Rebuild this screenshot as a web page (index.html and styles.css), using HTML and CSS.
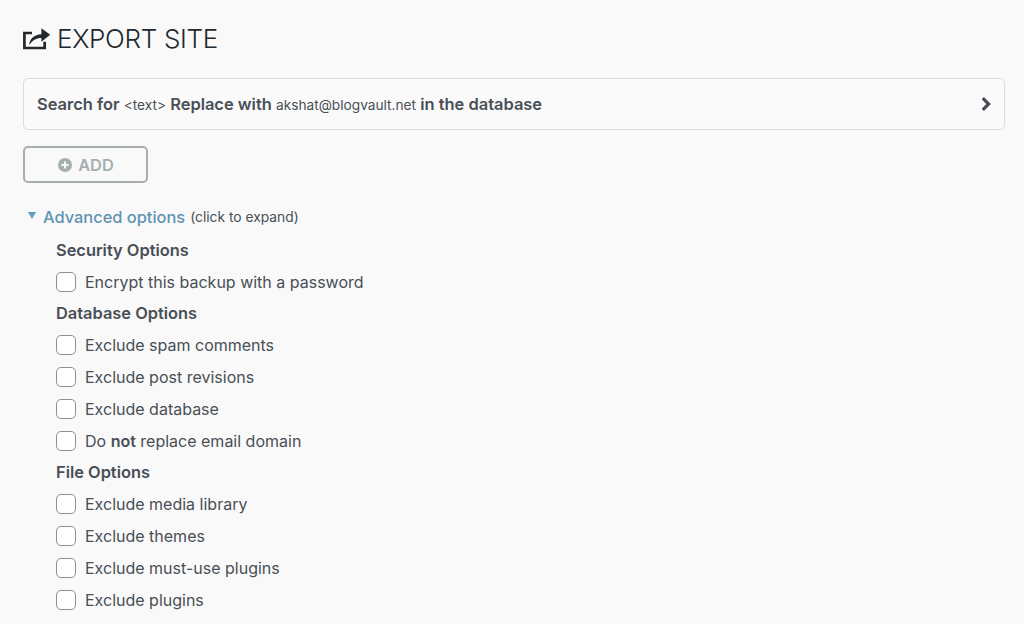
FILE: index.html
```html
<!DOCTYPE html>
<html lang="en">
<head>
    <meta charset="UTF-8">
    <meta name="viewport" content="width=device-width, initial-scale=1.0">
    <title>Export Site</title>
    <link rel="stylesheet" href="styles.css">
</head>
<body>

<header class="page-title">
    <svg class="title-icon" width="28" height="24" viewBox="0 0 28 24">
        <path d="M9 6H1.4V21H21.7V14.7" fill="none" stroke="#23282d" stroke-width="2.7"/>
        <path d="M6.2 18C6.7 12 11 7.6 18.4 7.3V1.3L27.2 7.8L18.4 14.8V11C13 11 9.5 13.5 6.2 18Z" fill="#23282d"/>
    </svg>
    <h1>EXPORT SITE</h1>
</header>

<div class="rule-card">
    <span class="rule-text">
        Search for <span class="rule-value">&lt;text&gt;</span> Replace with <span class="rule-value">akshat@blogvault.net</span> in the database
    </span>
    <svg class="rule-arrow" width="10" height="14" viewBox="0 0 10 14">
        <path d="M1.8 1.2L7.6 7L1.8 12.8" fill="none" stroke="#474d54" stroke-width="3.2"/>
    </svg>
</div>

<button class="add-button">
    <svg width="14" height="14" viewBox="0 0 14 14">
        <circle cx="7" cy="7" r="7" fill="#a7aeb2"/>
        <path d="M7 3.5V10.5M3.5 7H10.5" stroke="#f9f9f9" stroke-width="2"/>
    </svg>
    ADD
</button>

<div class="advanced-title">
    <span class="advanced-arrow"></span>
    <span class="advanced-link">Advanced options</span>
    <span class="advanced-hint">(click to expand)</span>
</div>

<div class="options">
    <h3>Security Options</h3>
    <label class="option"><span class="checkbox"></span>Encrypt this backup with a password</label>

    <h3>Database Options</h3>
    <label class="option"><span class="checkbox"></span>Exclude spam comments</label>
    <label class="option"><span class="checkbox"></span>Exclude post revisions</label>
    <label class="option"><span class="checkbox"></span>Exclude database</label>
    <label class="option"><span class="checkbox"></span><span>Do <b>not</b> replace email domain</span></label>

    <h3>File Options</h3>
    <label class="option"><span class="checkbox"></span>Exclude media library</label>
    <label class="option"><span class="checkbox"></span>Exclude themes</label>
    <label class="option"><span class="checkbox"></span>Exclude must-use plugins</label>
    <label class="option"><span class="checkbox"></span>Exclude plugins</label>
</div>

</body>
</html>
```

FILE: styles.css
```css
html, body {
    height: 624px;
    overflow: hidden;
}
body {
    font-family: Inter, "Liberation Sans", sans-serif;
    background-color: #f9f9f9;
    color: #484f56;
    margin: 0;
    padding: 23px 19px 0 23px;
}
.page-title {
    display: flex;
    align-items: center;
    gap: 6px;
    height: 32px;
}
.title-icon {
    flex: none;
}
h1 {
    margin: 0;
    padding-bottom: 2px;
    font-size: 26px;
    font-weight: 300;
    letter-spacing: -0.3px;
    color: #23282d;
}
.rule-card {
    display: flex;
    align-items: center;
    justify-content: space-between;
    box-sizing: border-box;
    height: 52px;
    margin-top: 23px;
    padding: 0 13px;
    background-color: #fafafa;
    border: 1px solid #dcdcde;
    border-radius: 5px;
}
.rule-text {
    font-size: 16.45px;
    font-weight: 600;
}
.rule-value {
    font-size: 13.7px;
    font-weight: 400;
}
.add-button {
    display: flex;
    align-items: center;
    justify-content: center;
    gap: 6px;
    box-sizing: border-box;
    width: 125px;
    height: 37px;
    margin-top: 16px;
    padding: 0 0 0 1px;
    background-color: #f9f9f9;
    border: 2px solid #a7aeb2;
    border-radius: 5px;
    color: #a7aeb2;
    font-family: inherit;
    font-size: 16.4px;
    font-weight: 600;
}
.advanced-title {
    display: flex;
    align-items: center;
    height: 20px;
    margin-top: 24px;
    margin-left: 5px;
}
.advanced-arrow {
    width: 0;
    height: 0;
    margin-right: 7px;
    margin-bottom: 3px;
    border-left: 4px solid transparent;
    border-right: 4px solid transparent;
    border-top: 7px solid #5b9dc0;
}
.advanced-link {
    font-size: 16.4px;
    font-weight: 500;
    color: #5f94b2;
}
.advanced-hint {
    margin-left: 5px;
    font-size: 13.8px;
}
.options {
    margin-left: 33px;
    margin-top: 8px;
}
h3 {
    margin: 0;
    height: 31px;
    line-height: 30px;
    font-size: 16.4px;
    font-weight: 600;
}
.option {
    display: flex;
    align-items: center;
    gap: 9px;
    height: 32px;
    font-size: 16px;
}
.option b {
    font-weight: 600;
}
.checkbox {
    flex: none;
    box-sizing: border-box;
    width: 20px;
    height: 20px;
    background-color: #fff;
    border: 1px solid #8c8f94;
    border-radius: 5px;
}
```
